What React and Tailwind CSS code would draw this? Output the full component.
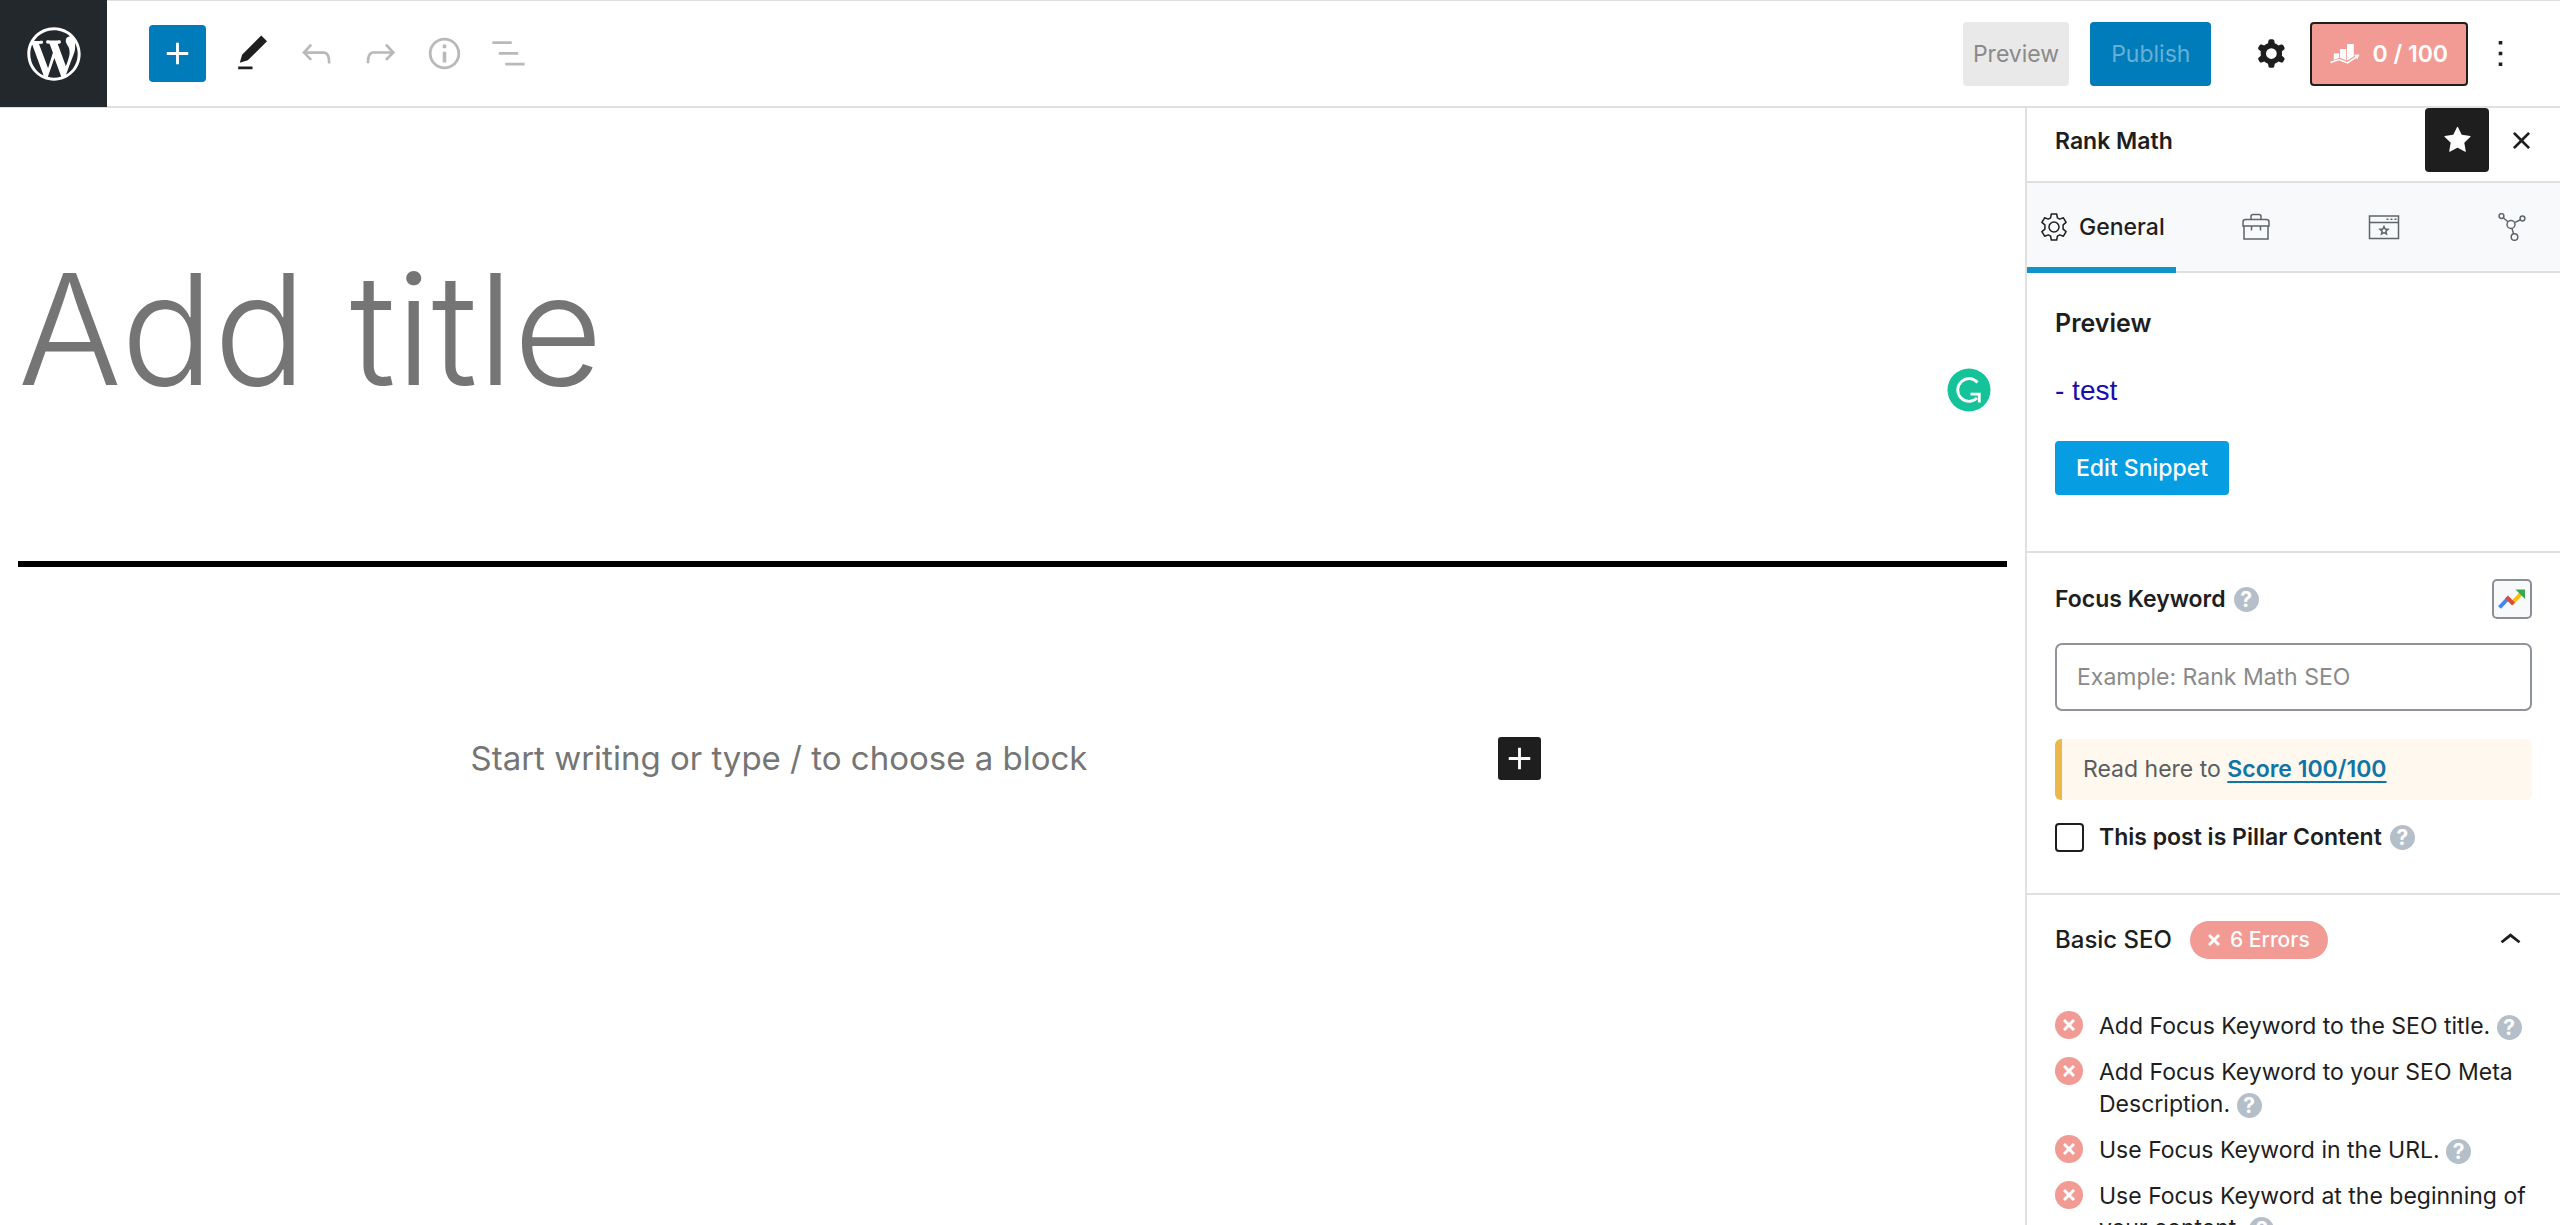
import React, { useState } from 'react';

const PATHS = {
  wordpress:
    'M20 10c0-5.51-4.49-10-10-10C4.48 0 0 4.49 0 10c0 5.52 4.48 10 10 10 5.51 0 10-4.48 10-10zM7.78 15.37L4.37 6.22c.55-.02 1.17-.08 1.17-.08.5-.06.44-1.13-.06-1.11 0 0-1.45.11-2.37.11-.18 0-.37 0-.58-.01C4.12 2.69 6.87 1.11 10 1.11c2.33 0 4.45.87 6.05 2.34-.68-.11-1.65.39-1.65 1.58 0 .74.45 1.36.9 2.1.35.61.55 1.36.55 2.46 0 1.49-1.4 5-1.4 5l-3.03-8.37c.54-.02.82-.17.82-.17.5-.05.44-1.25-.06-1.22 0 0-1.44.12-2.38.12-.87 0-2.33-.12-2.33-.12-.5-.03-.56 1.2-.06 1.22l.92.08 1.26 3.41zM17.41 10c.24-.64.74-1.87.43-4.25.7 1.29 1.05 2.71 1.05 4.25 0 3.29-1.73 6.24-4.4 7.78.97-2.59 1.94-5.2 2.92-7.78zM6.1 18.09C3.12 16.65 1.11 13.53 1.11 10c0-1.3.23-2.48.72-3.59C3.25 10.3 4.67 14.2 6.1 18.09zm4.03-6.63l2.58 6.98c-.86.29-1.76.45-2.71.45-.79 0-1.57-.11-2.29-.33.81-2.38 1.62-4.74 2.42-7.1z',
  plus: 'M18 11.2h-5.2V6h-1.6v5.2H6v1.6h5.2V18h1.6v-5.2H18z',
  edit: 'M20.1 5.1L16.9 2 6.2 12.7l-1.3 4.4 4.5-1.3L20.1 5.1zM4 20.8h8v-1.5H4v1.5z',
  undo: 'M18.3 11.7c-.6-.6-1.4-.9-2.3-.9H6.7l2.9-3.3-1.1-1-4.5 5L8.5 16l1-1-2.7-2.7H16c.5 0 .9.2 1.3.5 1 1 1 3.4 1 4.5v.3h1.5v-.2c0-1.5 0-4.3-1.5-5.7z',
  redo: 'M15.6 6.5l-1.1 1 2.9 3.3H8c-.9 0-1.7.3-2.3.9-1.4 1.5-1.4 4.2-1.4 5.6v.2h1.5v-.3c0-1.1 0-3.5 1-4.5.3-.3.7-.5 1.3-.5h9.2L14.5 15l1.1 1.1 4.6-4.6-4.6-5z',
  info: 'M12 3.2c-4.8 0-8.8 3.9-8.8 8.8 0 4.8 3.9 8.8 8.8 8.8 4.8 0 8.8-3.9 8.8-8.8 0-4.8-4-8.8-8.8-8.8zm0 16c-4 0-7.2-3.3-7.2-7.2C4.8 8 8 4.8 12 4.8s7.2 3.3 7.2 7.2c0 4-3.2 7.2-7.2 7.2zM11 17h2v-6h-2v6zm0-8h2V7h-2v2z',
  outline: 'M13.8 5.2H3v1.5h10.8V5.2zm-3.6 12v1.5H21v-1.5H10.2zm7.2-6H6.6v1.5h10.8v-1.5z',
  cog: 'M10.289 4.836A1 1 0 0111.275 4h1.306a1 1 0 01.987.836l.244 1.466c.787.26 1.503.679 2.108 1.218l1.393-.522a1 1 0 011.216.437l.653 1.13a1 1 0 01-.23 1.273l-1.148.944a6.025 6.025 0 010 2.435l1.149.946a1 1 0 01.23 1.272l-.653 1.13a1 1 0 01-1.216.437l-1.394-.522c-.605.54-1.32.958-2.108 1.218l-.244 1.466a1 1 0 01-.987.836h-1.306a1 1 0 01-.986-.836l-.244-1.466a5.995 5.995 0 01-2.108-1.218l-1.394.522a1 1 0 01-1.217-.436l-.653-1.131a1 1 0 01.23-1.272l1.149-.946a6.026 6.026 0 010-2.435l-1.148-.944a1 1 0 01-.23-1.272l.653-1.131a1 1 0 011.217-.437l1.393.522a5.994 5.994 0 012.108-1.218l.244-1.466zM14.929 12a3 3 0 11-6 0 3 3 0 016 0z',
  star: 'M11.776 4.454a.25.25 0 01.448 0l2.069 4.192a.25.25 0 00.188.137l4.626.672a.25.25 0 01.139.426l-3.348 3.263a.25.25 0 00-.072.222l.79 4.607a.25.25 0 01-.362.263l-4.138-2.175a.25.25 0 00-.232 0l-4.138 2.175a.25.25 0 01-.363-.263l.79-4.607a.25.25 0 00-.071-.222L4.754 9.881a.25.25 0 01.139-.426l4.626-.672a.25.25 0 00.188-.137l2.069-4.192z',
  close: 'M12 13.06l3.712 3.713 1.061-1.06L13.061 12l3.712-3.712-1.06-1.06L12 10.938 8.288 7.227l-1.061 1.06L10.939 12l-3.712 3.712 1.06 1.061L12 13.061z',
  more: 'M13 19h-2v-2h2v2zm0-6h-2v-2h2v2zm0-6h-2V5h2v2z',
  chevronUp: 'M6.5 12.4L12 8l5.5 4.4-.9 1.2L12 10l-4.5 3.6-1-1.2z',
};

const Icon = ({ name, viewBox = '0 0 24 24', className = 'size-[43px]' }) => (
  <svg viewBox={viewBox} className={className} fill="currentColor" fillRule="evenodd" aria-hidden="true">
    <path d={PATHS[name]} />
  </svg>
);

const ToolButton = ({ icon, label, className = 'text-[#b9b9b9]' }) => (
  <button type="button" aria-label={label} className={`flex size-16 items-center justify-center ${className}`}>
    <Icon name={icon} />
  </button>
);

const ScoreIcon = () => (
  <svg viewBox="0 0 30 22" className="h-[22px] w-[30px]" fill="#fff" aria-hidden="true">
    <path d="M3.800 9.500h5.400v4.200l-5.400 2.200z" />
    <path d="M10 5h6.200v11.500L10 13.800z" />
    <path d="M17 0h6.800v12.500L17 16.800z" />
    <path d="M.5 18.600l8.600-3.100 8.400 3.400 9.500-6.300" fill="none" stroke="#fff" strokeWidth="1.600" />
    <path d="M24 10.800l5.500-.3-2.200 5z" />
  </svg>
);

const GearIcon = () => (
  <svg viewBox="0 0 28 28" className="size-7" fill="none" stroke="currentColor" strokeWidth="1.5" strokeLinejoin="round" aria-hidden="true">
    <path d="M11.300 1h5.400l.7 3.800 2.300 1.300 3.700-1.300 2.700 4.600-3 2.500v4.200l3 2.500-2.700 4.600-3.700-1.300-2.300 1.300-.7 3.800h-5.400l-.7-3.800-2.300-1.300-3.700 1.300-2.700-4.600 3-2.500v-4.200l-3-2.500 2.700-4.600 3.700 1.300 2.300-1.300z" />
    <circle cx="14" cy="14" r="5" />
  </svg>
);

const ToolboxIcon = () => (
  <svg viewBox="0 0 28 28" className="size-7" fill="none" stroke="currentColor" strokeWidth="1.5" aria-hidden="true">
    <path d="M9 6.500V3.500q0-2 2-2h6q2 0 2 2v3" />
    <path d="M1 13V9q0-2.500 2.500-2.500h21Q27 6.500 27 9v4z" />
    <path d="M2 13v13h24V13M9.500 13v4.500M18.500 13v4.500" />
  </svg>
);

const WindowIcon = () => (
  <svg viewBox="0 0 32 26" className="h-[26px] w-8" fill="none" stroke="currentColor" strokeWidth="1.5" aria-hidden="true">
    <path d="M1.500 2h29v22.500h-29zM1.500 8.500h29" />
    <path d="M18.500 5.300h2M22.500 5.300h2M26.500 5.300h2" />
    <path d="M16 12.500l1.200 2.600 2.800.3-2.100 1.900.6 2.800-2.500-1.400-2.500 1.400.6-2.800-2.100-1.900 2.800-.3z" />
  </svg>
);

const NodesIcon = () => (
  <svg viewBox="0 0 28 28" className="size-7" fill="none" stroke="currentColor" strokeWidth="1.5" aria-hidden="true">
    <circle cx="3.500" cy="3" r="2.400" />
    <circle cx="24.500" cy="5.500" r="2.400" />
    <circle cx="13" cy="11.500" r="4" />
    <circle cx="16.500" cy="24" r="3.300" />
    <path d="M5.200 4.700l4.800 4.100M22.500 6.700l-6 2.900M14 15.400l1.500 5.400" />
  </svg>
);

const TrendsIcon = () => (
  <svg viewBox="0 0 28 22" className="h-[22px] w-7" aria-hidden="true">
    <g fill="none" strokeWidth="4">
      <path d="M1.500 19.500L10 10.500" stroke="#4285f4" />
      <path d="M13.500 16L23.500 5" stroke="#fbbc04" />
      <path d="M8.500 9l7 7" stroke="#d94b3d" />
    </g>
    <path d="M17.500 1.500H27V11z" fill="#34a853" />
  </svg>
);

const Help = ({ className = '' }) => (
  <button
    type="button"
    aria-label="Help"
    className={`inline-flex size-[25px] items-center justify-center rounded-full bg-[#b5bfc9] text-[21px] leading-none font-bold text-white ${className}`}
  >
    ?
  </button>
);

const Cross = ({ className }) => (
  <svg viewBox="0 0 12 12" className={className} stroke="#fff" strokeWidth="3" aria-hidden="true">
    <path d="M1 1l10 10M11 1L1 11" />
  </svg>
);

const TABS = [
  { label: 'Advanced', icon: <ToolboxIcon /> },
  { label: 'Rich Snippet', icon: <WindowIcon /> },
  { label: 'Social', icon: <NodesIcon /> },
];

const ERRORS = [
  'Add Focus Keyword to the SEO title.',
  'Add Focus Keyword to your SEO Meta Description.',
  'Use Focus Keyword in the URL.',
  'Use Focus Keyword at the beginning of your content.',
];

const Header = () => (
  <header className="flex h-[108px] shrink-0 items-center justify-between border-t border-b-2 border-[#e0e0e0]">
    <div className="flex items-center">
      <a href="#posts" aria-label="View Posts" className="flex h-[107px] w-[107px] items-center justify-center bg-[#23282d] text-white">
        <Icon name="wordpress" viewBox="-2 -2 24 24" className="size-16" />
      </a>
      <button type="button" aria-label="Add block" className="mr-[14px] ml-[42px] flex size-[57px] items-center justify-center rounded-[4px] bg-[#007cba] text-white">
        <Icon name="plus" />
      </button>
      <ToolButton icon="edit" label="Tools" className="text-[#1e1e1e]" />
      <ToolButton icon="undo" label="Undo" />
      <ToolButton icon="redo" label="Redo" />
      <ToolButton icon="info" label="Details" />
      <ToolButton icon="outline" label="Outline" />
    </div>
    <div className="flex items-center pr-7 text-[23px]">
      <button type="button" className="h-16 rounded-[4px] bg-[#e9e9e9] px-[10px] pt-[2px] text-[#8a8a8a]">Preview</button>
      <button type="button" className="mr-7 ml-[21px] h-16 rounded-[4px] bg-[#007cba] px-[21px] pt-[2px] text-[#66b0d6]">Publish</button>
      <ToolButton icon="cog" label="Settings" className="text-[#1e1e1e]" />
      <button type="button" className="ml-[7px] flex h-16 items-center gap-3 rounded-[4px] border-2 border-[#1e1e1e] bg-[#f29b95] px-[18px] pt-[2px] font-semibold text-white">
        <ScoreIcon />
        0 / 100
      </button>
      <ToolButton icon="more" label="Options" className="text-[#1e1e1e]" />
    </div>
  </header>
);

const Editor = () => (
  <main className="min-w-0 flex-1 px-[18px]">
    <div className="relative border-b-[6px] border-black pt-[122px] pb-[133px]">
      <input
        type="text"
        aria-label="Add title"
        placeholder="Add title"
        className="block h-[198px] w-full text-[154px] font-light outline-none placeholder:text-[#757575]"
      />
      <svg viewBox="0 0 44 44" className="absolute right-4 bottom-[149px] size-11" role="img" aria-label="Grammarly">
        <circle cx="22" cy="22" r="21.500" fill="#15c39a" />
        <path d="M30.500 14.500a11.300 11.300 0 1 0-.5 15.500" fill="none" stroke="#fff" strokeWidth="2.800" />
        <path d="M23.500 26.200h8.800v8.300" fill="none" stroke="#fff" strokeWidth="2.800" />
      </svg>
    </div>
    <div className="mx-auto mt-[155px] flex w-full max-w-[1084px] items-center justify-between pr-[14px]">
      <p className="text-[33px] leading-[72px] text-[#757575]">Start writing or type / to choose a block</p>
      <button type="button" aria-label="Add block" className="flex size-[43px] items-center justify-center rounded-[3px] bg-[#1e1e1e] text-white">
        <Icon name="plus" />
      </button>
    </div>
  </main>
);

const Sidebar = () => {
  const [open, setOpen] = useState(true);

  return (
    <aside className="flex w-[535px] shrink-0 flex-col border-l-2 border-[#e0e0e0]">
      <div className="flex items-center border-b-2 border-[#e0e0e0] pr-[7px] pb-[9px] pl-7">
        <h2 className="flex-1 pt-[2px] text-[23px] font-semibold">Rank Math</h2>
        <button type="button" aria-label="Unpin" className="flex size-16 items-center justify-center rounded-[4px] bg-[#1e1e1e] text-white">
          <Icon name="star" />
        </button>
        <ToolButton icon="close" label="Close" className="text-[#1e1e1e]" />
      </div>

      <nav className="flex h-[90px] shrink-0 border-b-2 border-[#e0e0e0] bg-[#f8f9fb]">
        <button type="button" className="-mb-[2px] flex w-[149px] items-center gap-[11px] border-b-[6px] border-[#0f94c8] pt-[4px] pl-[13px] text-[23px] font-medium">
          <GearIcon />
          General
        </button>
        {TABS.map((tab) => (
          <button key={tab.label} type="button" aria-label={tab.label} className="flex flex-1 items-center justify-center pl-8 text-[#5f6469]">
            {tab.icon}
          </button>
        ))}
      </nav>

      <section className="border-b-2 border-[#e0e0e0] px-7 pt-8 pb-14">
        <h3 className="text-[25px] leading-9 font-semibold">Preview</h3>
        <p className="mt-8 font-[Liberation_Sans,sans-serif] text-[28px] leading-9 text-[#1a0dab]">- test</p>
        <button type="button" className="mt-8 h-[54px] rounded-[4px] bg-[#069de3] px-[21px] text-[23px] font-medium text-white">
          Edit Snippet
        </button>
      </section>

      <section className="border-b-2 border-[#e0e0e0] px-7 pt-[26px] pb-[38px]">
        <div className="flex items-center">
          <label htmlFor="keyword" className="text-[23px] font-semibold">Focus Keyword</label>
          <Help className="ml-2" />
          <button type="button" aria-label="Trends" className="ml-auto flex size-10 items-center justify-center rounded-[5px] border-2 border-[#8c8f94] bg-[#f8f9fb]">
            <TrendsIcon />
          </button>
        </div>
        <input
          id="keyword"
          type="text"
          placeholder="Example: Rank Math SEO"
          className="mt-6 block h-[68px] w-full rounded-[7px] border-2 border-[#8f949a] px-5 text-[23px] placeholder:text-[#8a8a8a]"
        />
        <p className="mt-7 rounded-[6px] border-l-[7px] border-[#edb849] bg-[#fff8ee] px-[21px] text-[23px] leading-[61px] text-[#5a5d60]">
          Read here to{' '}
          <a href="#score" className="font-semibold text-[#0f75a8] underline underline-offset-4">Score 100/100</a>
        </p>
        <div className="mt-5 flex items-center">
          <input id="pillar" type="checkbox" className="size-[29px] appearance-none rounded-[4px] border-2 border-[#1e1e1e]" />
          <label htmlFor="pillar" className="ml-[15px] text-[23px] font-semibold">This post is Pillar Content</label>
          <Help className="ml-2" />
        </div>
      </section>

      <section className="px-7 pt-6">
        <div className="flex items-center">
          <h3 className="text-[24px] leading-9 font-medium">Basic SEO</h3>
          <span className="ml-[18px] flex h-[38px] items-center gap-[10px] rounded-full bg-[#f29b95] px-[18px] text-[21px] font-medium text-white">
            <Cross className="size-3" />
            6 Errors
          </span>
          <button type="button" aria-label="Toggle Basic SEO" aria-expanded={open} onClick={() => setOpen(!open)} className="ml-auto">
            <Icon name="chevronUp" />
          </button>
        </div>
        {open && (
          <ul className="mt-12 flex flex-col gap-[14px]">
            {ERRORS.map((error) => (
              <li key={error} className="flex gap-4 text-[23px] leading-8">
                <span className="mt-[1px] flex size-7 shrink-0 items-center justify-center rounded-full bg-[#f29b95]">
                  <Cross className="size-3" />
                </span>
                <span>
                  {error} <Help className="align-middle" />
                </span>
              </li>
            ))}
          </ul>
        )}
      </section>
    </aside>
  );
};

const App = () => (
  <div className="flex h-screen flex-col overflow-hidden bg-white font-[Inter,sans-serif] text-[#1e1e1e]">
    <Header />
    <div className="flex min-h-0 flex-1">
      <Editor />
      <Sidebar />
    </div>
  </div>
);

export default App;
